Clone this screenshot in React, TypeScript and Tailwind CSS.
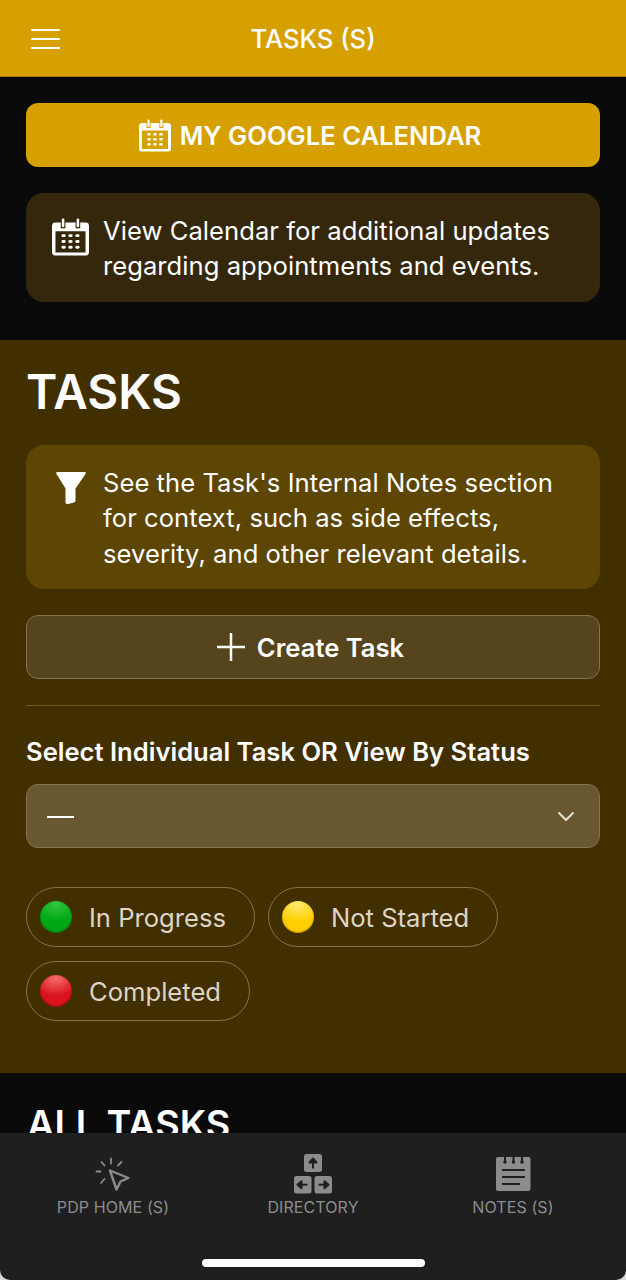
import React from "react";

const CalendarIcon = ({ w, h, bg }: { w: number; h: number; bg: string }) => (
  <svg width={w} height={h} viewBox="0 0 32 32" aria-hidden="true">
    <path fill="white" d="M0 6.500Q0 3.500 3 3.500H29Q32 3.500 32 6.500V29Q32 32 29 32H3Q0 32 0 29ZM3 11V29.500H29V11Z" fillRule="evenodd" />
    <rect x="7.600" y="0" width="4" height="8.500" fill={bg} />
    <rect x="20.400" y="0" width="4" height="8.500" fill={bg} />
    <rect x="8.500" y="0" width="2.200" height="7.500" rx="1" fill="white" />
    <rect x="21.300" y="0" width="2.200" height="7.500" rx="1" fill="white" />
    {[8.2, 14.2, 20.2].map((x) => [13.6, 18.6, 23.6].map((y) => (
      <rect key={`${x}-${y}`} x={x} y={y} width="3.600" height="2.500" rx="1.200" fill="white" />
    )))}
  </svg>
);

const Pill = ({ label, dot, light, shade }: { label: string; dot: string; light: string; shade: string }) => (
  <div className="flex h-[60px] items-center rounded-full border border-[#84714d] pl-[13px] pr-[28px]">
    <span
      className="h-8 w-8 rounded-full"
      style={{ background: `radial-gradient(ellipse 70% 55% at 50% 10%, ${light} 0, transparent 100%), ${dot}`, boxShadow: `inset 0 -1px 2px ${shade}` }}
    />
    <span className="ml-[17px] translate-y-px text-[25.600px] leading-none text-[#dcd5c6]">{label}</span>
  </div>
);

export default function App() {
  return (
    <div
      className="relative h-[1280px] w-[626px] overflow-hidden bg-[#0a0a0a] text-white"
      style={{ fontFamily: "Inter, 'Liberation Sans', sans-serif" }}
    >
      <header className="relative flex h-[77px] items-center justify-center border-b border-[#a67d00] bg-[#d6a000]">
        <div className="absolute left-[31px] top-[29px] flex w-[29px] flex-col gap-[7px]">
          <span className="h-[2px] rounded-full bg-white" />
          <span className="h-[2px] rounded-full bg-white" />
          <span className="h-[2px] rounded-full bg-white" />
        </div>
        <h1 className="translate-y-px text-[25.600px] font-medium leading-none">TASKS (S)</h1>
      </header>

      <section className="flex flex-col gap-[26px] px-[26px] pb-[38px] pt-[26px]">
        <div className="flex h-16 items-center justify-center gap-[9px] rounded-xl bg-[#d6a000] pr-[6px]">
          <CalendarIcon w={32} h={33} bg="#d6a000" />
          <span className="translate-y-px text-[25.600px] font-semibold leading-none">MY GOOGLE CALENDAR</span>
        </div>
        <div className="flex h-[109px] gap-[14px] rounded-[18px] bg-[#35270b] pl-[26px] pr-4 pt-[20px]">
          <div className="pt-[4px]"><CalendarIcon w={37} h={40} bg="#35270b" /></div>
          <p className="whitespace-nowrap text-[25.600px] leading-[35px] tracking-[0.04px]">
            View Calendar for additional updates<br />regarding appointments and events.
          </p>
        </div>
      </section>

      <section className="flex h-[733px] flex-col bg-[#422f00] px-[26px] pt-[24px]">
        <h2 className="text-[47.500px] font-semibold leading-[56px]">TASKS</h2>
        <div className="mt-[25px] flex h-[144px] rounded-[18px] bg-[#5d4503] pl-[30px] pt-[19.500px]">
          <svg width="30" height="32" viewBox="0 0 30 32" className="mt-[7.500px]" aria-hidden="true">
            <path fill="white" d="M1.500 0H28.500Q30.500 0 29.500 2L19.500 16.500V28.500Q19.500 30 18 30.500L12 32Q9.500 32.300 9.500 30V16.500L.5 2Q-.5 0 1.500 0Z" />
          </svg>
          <p className="ml-[17px] whitespace-nowrap text-[25.600px] leading-[35.500px] tracking-[0.04px]">
            See the Task's Internal Notes section<br />for context, such as side effects,<br />severity, and other relevant details.
          </p>
        </div>
        <div className="mt-[26px] flex h-16 items-center justify-center gap-[12px] rounded-xl border border-[#84744f] bg-[#55441c] pr-[5px]">
          <svg width="28" height="28" viewBox="0 0 28 28" aria-hidden="true">
            <path stroke="white" strokeWidth="2.500" d="M14 0V28M0 14H28" />
          </svg>
          <span className="translate-y-px text-[25.600px] font-semibold leading-none">Create Task</span>
        </div>
        <div className="mt-[26px] h-px bg-[#6c5a31]" />
        <label className="mt-[31px] text-[25.600px] font-semibold leading-[30px]">Select Individual Task OR View By Status</label>
        <div className="mt-[17px] flex h-16 items-center justify-between rounded-xl border border-[#84744f] bg-[#695732] pl-[20px] pr-[24px]">
          <span className="h-[2.500px] w-[27px] translate-y-px bg-white" />
          <svg width="18" height="11" viewBox="0 0 18 11" aria-hidden="true">
            <path d="M2 2L9 9L16 2" fill="none" stroke="#e6e0d2" strokeWidth="2" strokeLinecap="round" strokeLinejoin="round" />
          </svg>
        </div>
        <div className="mt-[39px] flex flex-wrap gap-x-[13px] gap-y-[14px]">
          <Pill label="In Progress" dot="#00a814" light="rgba(70,210,80,.7)" shade="#006b10" />
          <Pill label="Not Started" dot="#ffd000" light="rgba(255,240,140,.8)" shade="#b98a00" />
          <Pill label="Completed" dot="#d9141c" light="rgba(255,130,130,.8)" shade="#8d0a10" />
        </div>
      </section>

      <section className="px-[27px] pt-[29px]">
        <h2 className="text-[37.700px] font-semibold leading-[44px]">ALL TASKS</h2>
      </section>

      <div className="absolute inset-x-0 bottom-0 h-[147px] bg-[#d8d8d8]">
        <nav className="relative h-full rounded-b-[10px] bg-[#1f1f1f]">
          <div className="grid grid-cols-[226px_174px_226px] pt-[21px]">
            <div className="flex flex-col items-center text-[#8c8c8c]">
              <svg width="36" height="36" viewBox="0 0 36 36" fill="none" stroke="currentColor" strokeLinecap="round" strokeLinejoin="round" className="mt-[3px]" aria-hidden="true">
                <path strokeWidth="2.400" d="M15 13.500L33.500 21L25.500 24.500L21.500 32.500Z" />
                <path strokeWidth="1.800" d="M16 1.500V6.500M6.500 5L9.500 8.500M26.500 5L23 8.500M1.500 14.500H5.500M6 26L9.500 22" />
              </svg>
              <span className="mt-[4px] text-[16px] leading-5 tracking-[0.1px]">PDP HOME (S)</span>
            </div>
            <div className="flex flex-col items-center text-[#8c8c8c]">
              <svg width="40" height="40" viewBox="0 0 40 40" aria-hidden="true">
                <rect x="11" y="0" width="18" height="18" rx="2.500" fill="#8c8c8c" />
                <rect x="1" y="22" width="17.500" height="17.500" rx="2.500" fill="#8c8c8c" />
                <rect x="21.500" y="22" width="17.500" height="17.500" rx="2.500" fill="#8c8c8c" />
                <g stroke="#1f1f1f" strokeWidth="2" fill="#1f1f1f" strokeLinejoin="round">
                  <path d="M20 14.500V7" />
                  <path d="M16.500 8.500L20 4.500L23.500 8.500Z" />
                  <path d="M14.500 30.700H7" />
                  <path d="M8.500 27.200L4.500 30.700L8.500 34.200Z" />
                  <path d="M25.500 30.700H33" />
                  <path d="M31.500 27.200L35.500 30.700L31.500 34.200Z" />
                </g>
              </svg>
              <span className="mt-[3px] text-[16px] leading-5 tracking-[0.1px]">DIRECTORY</span>
            </div>
            <div className="flex flex-col items-center text-[#8c8c8c]">
              <svg width="36" height="36" viewBox="0 0 36 36" className="mt-[3px]" aria-hidden="true">
                <rect x="1" y="0" width="34.500" height="34" rx="2" fill="#8c8c8c" />
                <g fill="#1f1f1f">
                  <rect x="9" y="0" width="2" height="5" />
                  <rect x="17.500" y="0" width="2" height="5" />
                  <rect x="26" y="0" width="2" height="5" />
                  <circle cx="10" cy="5" r="1.800" />
                  <circle cx="18.500" cy="5" r="1.800" />
                  <circle cx="27" cy="5" r="1.800" />
                  <rect x="7" y="12" width="23" height="2" />
                  <rect x="7" y="19" width="23" height="2" />
                  <rect x="7" y="26" width="18" height="2" />
                </g>
              </svg>
              <span className="mt-[4px] text-[16px] leading-5 tracking-[0.1px]">NOTES (S)</span>
            </div>
          </div>
          <div className="absolute bottom-[13px] left-[202px] h-2 w-[223px] rounded-full bg-white" />
        </nav>
      </div>
    </div>
  );
}
